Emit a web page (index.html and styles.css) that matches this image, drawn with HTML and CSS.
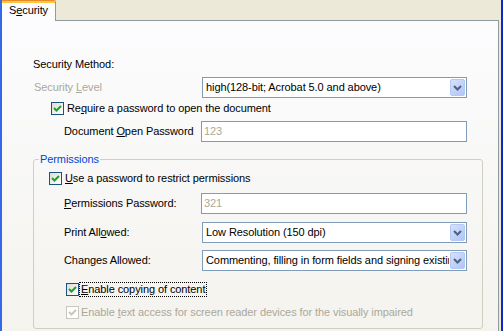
FILE: index.html
```html
<!DOCTYPE html>
<html lang="en">
<head>
    <meta charset="UTF-8">
    <title>Document Security</title>
    <link rel="stylesheet" href="styles.css">
</head>
<body>
    <div class="window">
        <div class="dialog">
            <div class="tabs">
                <div class="tab">S<u>e</u>curity</div>
            </div>
            <div class="page">
                <div class="heading">Security Method:</div>

                <div class="field">
                    <span class="label disabled first">Security <u>L</u>evel</span>
                    <div class="select">
                        <span class="value">high(128-bit; Acrobat 5.0 and above)</span>
                        <span class="drop"><svg width="15" height="17" viewBox="0 0 15 17"><polyline points="4,7 7.5,10.5 11,7" fill="none" stroke="#4D6185" stroke-width="2"/></svg></span>
                    </div>
                </div>

                <div class="check top-check">
                    <span class="box"><svg width="11" height="11" viewBox="0 0 11 11"><polyline points="2,5 4.5,7.5 9,3" fill="none" stroke="#21A121" stroke-width="2"/></svg></span>
                    <span class="text">Re<u>q</u>uire a password to open the document</span>
                </div>

                <div class="field gap6">
                    <span class="label">Document <u>O</u>pen Password</span>
                    <div class="input">123</div>
                </div>

                <fieldset class="group">
                    <legend>Permissions</legend>

                    <div class="check perm-check">
                        <span class="box"><svg width="11" height="11" viewBox="0 0 11 11"><polyline points="2,5 4.5,7.5 9,3" fill="none" stroke="#21A121" stroke-width="2"/></svg></span>
                        <span class="text"><u>U</u>se a password to restrict permissions</span>
                    </div>

                    <div class="field inner gap8">
                        <span class="label"><u>P</u>ermissions Password:</span>
                        <div class="input">321</div>
                    </div>

                    <div class="field inner gap8">
                        <span class="label">Print All<u>o</u>wed:</span>
                        <div class="select">
                            <span class="value">Low Resolution (150 dpi)</span>
                            <span class="drop"><svg width="15" height="17" viewBox="0 0 15 17"><polyline points="4,7 7.5,10.5 11,7" fill="none" stroke="#4D6185" stroke-width="2"/></svg></span>
                        </div>
                    </div>

                    <div class="field inner gap7">
                        <span class="label">Changes Allowed:</span>
                        <div class="select">
                            <span class="value">Commenting, filling in form fields and signing existing signature fields</span>
                            <span class="drop"><svg width="15" height="17" viewBox="0 0 15 17"><polyline points="4,7 7.5,10.5 11,7" fill="none" stroke="#4D6185" stroke-width="2"/></svg></span>
                        </div>
                    </div>

                    <div class="check sub-check copy">
                        <span class="box"><svg width="11" height="11" viewBox="0 0 11 11"><polyline points="2,5 4.5,7.5 9,3" fill="none" stroke="#21A121" stroke-width="2"/></svg></span>
                        <span class="text focus"><u>E</u>nable copying of content</span>
                    </div>

                    <div class="check sub-check disabled-check">
                        <span class="box"><svg width="11" height="11" viewBox="0 0 11 11"><polyline points="2,5 4.5,7.5 9,3" fill="none" stroke="#CAC8BB" stroke-width="2"/></svg></span>
                        <span class="text">Enable <u>t</u>ext access for screen reader devices for the visually impaired</span>
                    </div>
                </fieldset>
            </div>
        </div>
    </div>
</body>
</html>
```

FILE: styles.css
```css
body {
    margin: 0;
    font-family: "Liberation Sans", Arial, sans-serif;
    font-size: 11px;
    line-height: 13px;
    letter-spacing: -0.09px;
    color: #000;
    overflow: hidden;
}
.window {
    height: 331px;
    display: flex;
    border-left: 2px solid #3468E8;
    border-right: 2px solid #0A2ACF;
}
.dialog {
    flex: 1;
    display: flex;
    flex-direction: column;
    background-color: #ECE9D8;
    padding-right: 2px;
}
.tabs {
    height: 20px;
    display: flex;
}
.tab {
    position: relative;
    z-index: 1;
    width: 53px;
    height: 17px;
    margin-bottom: -1px;
    padding-top: 3px;
    border-top: 1px solid #E68B2C;
    border-right: 1px solid #919B9C;
    border-top-right-radius: 2px;
    box-shadow: inset 0 2px 0 #FFC73C;
    background-color: #FCFCFE;
    text-align: center;
}
.page {
    flex: 1;
    border-top: 1px solid #919B9C;
    border-right: 1px solid #919B9C;
    background: linear-gradient(#FCFCFE, #F4F3EE);
    padding: 37px 0 0 31px;
}
.heading {
    height: 13px;
}
.field {
    display: flex;
    align-items: center;
    height: 21px;
    margin-top: 6px;
}
.field.gap6 { margin-top: 6px; }
.field.gap7 { margin-top: 7px; }
.field.gap8 { margin-top: 8px; }
.label {
    flex: none;
    width: 168px;
    padding-left: 31px;
    box-sizing: border-box;
}
.label.first {
    padding-left: 1px;
}
.field.inner .label {
    width: 167px;
    padding-left: 30px;
}
.disabled {
    color: #ACA899;
}
.select {
    display: flex;
    align-items: center;
    width: 265px;
    height: 21px;
    margin-left: 1px;
    box-sizing: border-box;
    border: 1px solid #7F9DB9;
    background-color: #fff;
}
.select .value {
    flex: 1;
    padding-left: 3px;
    white-space: nowrap;
    overflow: hidden;
}
.drop {
    flex: none;
    width: 15px;
    height: 17px;
    margin: 0 1px 0 1px;
    box-sizing: border-box;
    border: 1px solid #B4C8F6;
    border-radius: 2px;
    background: linear-gradient(135deg, #D6E1FC, #B0C4F5);
    display: flex;
}
.drop svg {
    margin: -1px;
}
.input {
    width: 266px;
    height: 21px;
    box-sizing: border-box;
    border: 1px solid #7F9DB9;
    background-color: #fff;
    padding: 3px 0 0 2px;
    color: #ACA899;
}
.check {
    display: flex;
    align-items: center;
    height: 13px;
}
.box {
    flex: none;
    width: 13px;
    height: 13px;
    box-sizing: border-box;
    border: 1px solid #1C5180;
    background: linear-gradient(135deg, #DCDCD7, #FFFFFF);
}
.box svg {
    display: block;
}
.check .text {
    margin-left: 3px;
}
.top-check {
    margin-top: 4px;
    margin-left: 18px;
}
.group {
    margin: 11px 0 0 0;
    width: 450px;
    box-sizing: border-box;
    padding: 0 0 9px 0;
    border: 1px solid #D0D0BF;
    border-radius: 3px;
}
.group legend {
    margin-left: 5px;
    padding: 0 1px;
    color: #0046D5;
}
.perm-check {
    margin-top: 6px;
    margin-left: 15px;
}
.sub-check {
    margin-left: 32px;
}
.sub-check .text {
    margin-left: 1px;
    padding: 0 1px;
}
.copy {
    margin-top: 12px;
}
.focus {
    outline: 1px dotted #000;
}
.disabled-check {
    margin-top: 10px;
    color: #ACA899;
}
.disabled-check .box {
    border-color: #CAC8BB;
    background: #fff;
}
```
